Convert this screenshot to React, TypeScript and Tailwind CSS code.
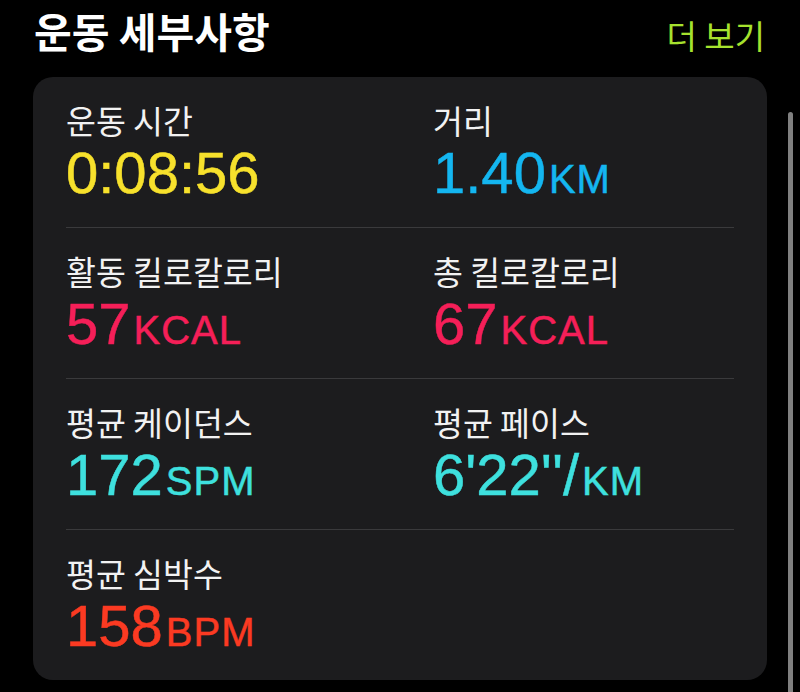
import React from "react";

type Metric = {
  label: string;
  value: string;
  unit: string;
  color: string;
};

const rows: Metric[][] = [
  [
    { label: "운동 시간", value: "0:08:56", unit: "", color: "text-[#f7e12c]" },
    { label: "거리", value: "1.40", unit: "KM", color: "text-[#14b6f0]" },
  ],
  [
    { label: "활동 킬로칼로리", value: "57", unit: "KCAL", color: "text-[#f51f58]" },
    { label: "총 킬로칼로리", value: "67", unit: "KCAL", color: "text-[#f51f58]" },
  ],
  [
    { label: "평균 케이던스", value: "172", unit: "SPM", color: "text-[#3ee0de]" },
    { label: "평균 페이스", value: "6'22''/", unit: "KM", color: "text-[#3ee0de]" },
  ],
  [{ label: "평균 심박수", value: "158", unit: "BPM", color: "text-[#fb3a22]" }],
];

const kr = "font-['Noto_Sans_CJK_KR','Noto_Sans',sans-serif]";
const num = "font-['Liberation_Sans',Arial,sans-serif]";

function MetricCell({ m }: { m: Metric }) {
  return (
    <div className="flex flex-col">
      <div className={`${kr} h-[38px] text-[32.5px] leading-[38px] text-[#f2f2f2]`}>{m.label}</div>
      <div
        className={`${num} ${m.color} mt-[6px] h-[56px] text-[58px] leading-[56px] whitespace-nowrap [-webkit-text-stroke:0.5px_currentColor]`}
      >
        {m.value}
        {m.unit && <span className="ml-[3px] text-[40px] tracking-[1px]">{m.unit}</span>}
      </div>
    </div>
  );
}

export default function App() {
  return (
    <div className="relative h-[692px] w-[800px] overflow-hidden bg-black">
      <div className="flex h-[77px] items-start justify-between pl-[34px] pr-[35px]">
        <h1 className={`${kr} mt-[4px] text-[41px] font-bold leading-[52px] text-white`}>운동 세부사항</h1>
        <button className={`${kr} mt-[14px] text-[33px] leading-[42px] text-[#a6e22e]`}>더 보기</button>
      </div>

      <div className="mx-[33px] rounded-[20px] bg-[#1c1c1e] px-[33px]">
        {rows.map((row, i) => (
          <div
            key={i}
            className={`grid grid-cols-[367px_1fr] pt-[24px] pb-[26px] ${
              i < rows.length - 1 ? "border-b border-[#3a3a3c]" : "pb-[25px]"
            }`}
          >
            {row.map((m) => (
              <MetricCell key={m.label} m={m} />
            ))}
          </div>
        ))}
      </div>

      {/* scroll indicator */}
      <div className="absolute left-[788px] top-[112px] h-[600px] w-[5px] rounded-full bg-[#808080]" />
    </div>
  );
}
